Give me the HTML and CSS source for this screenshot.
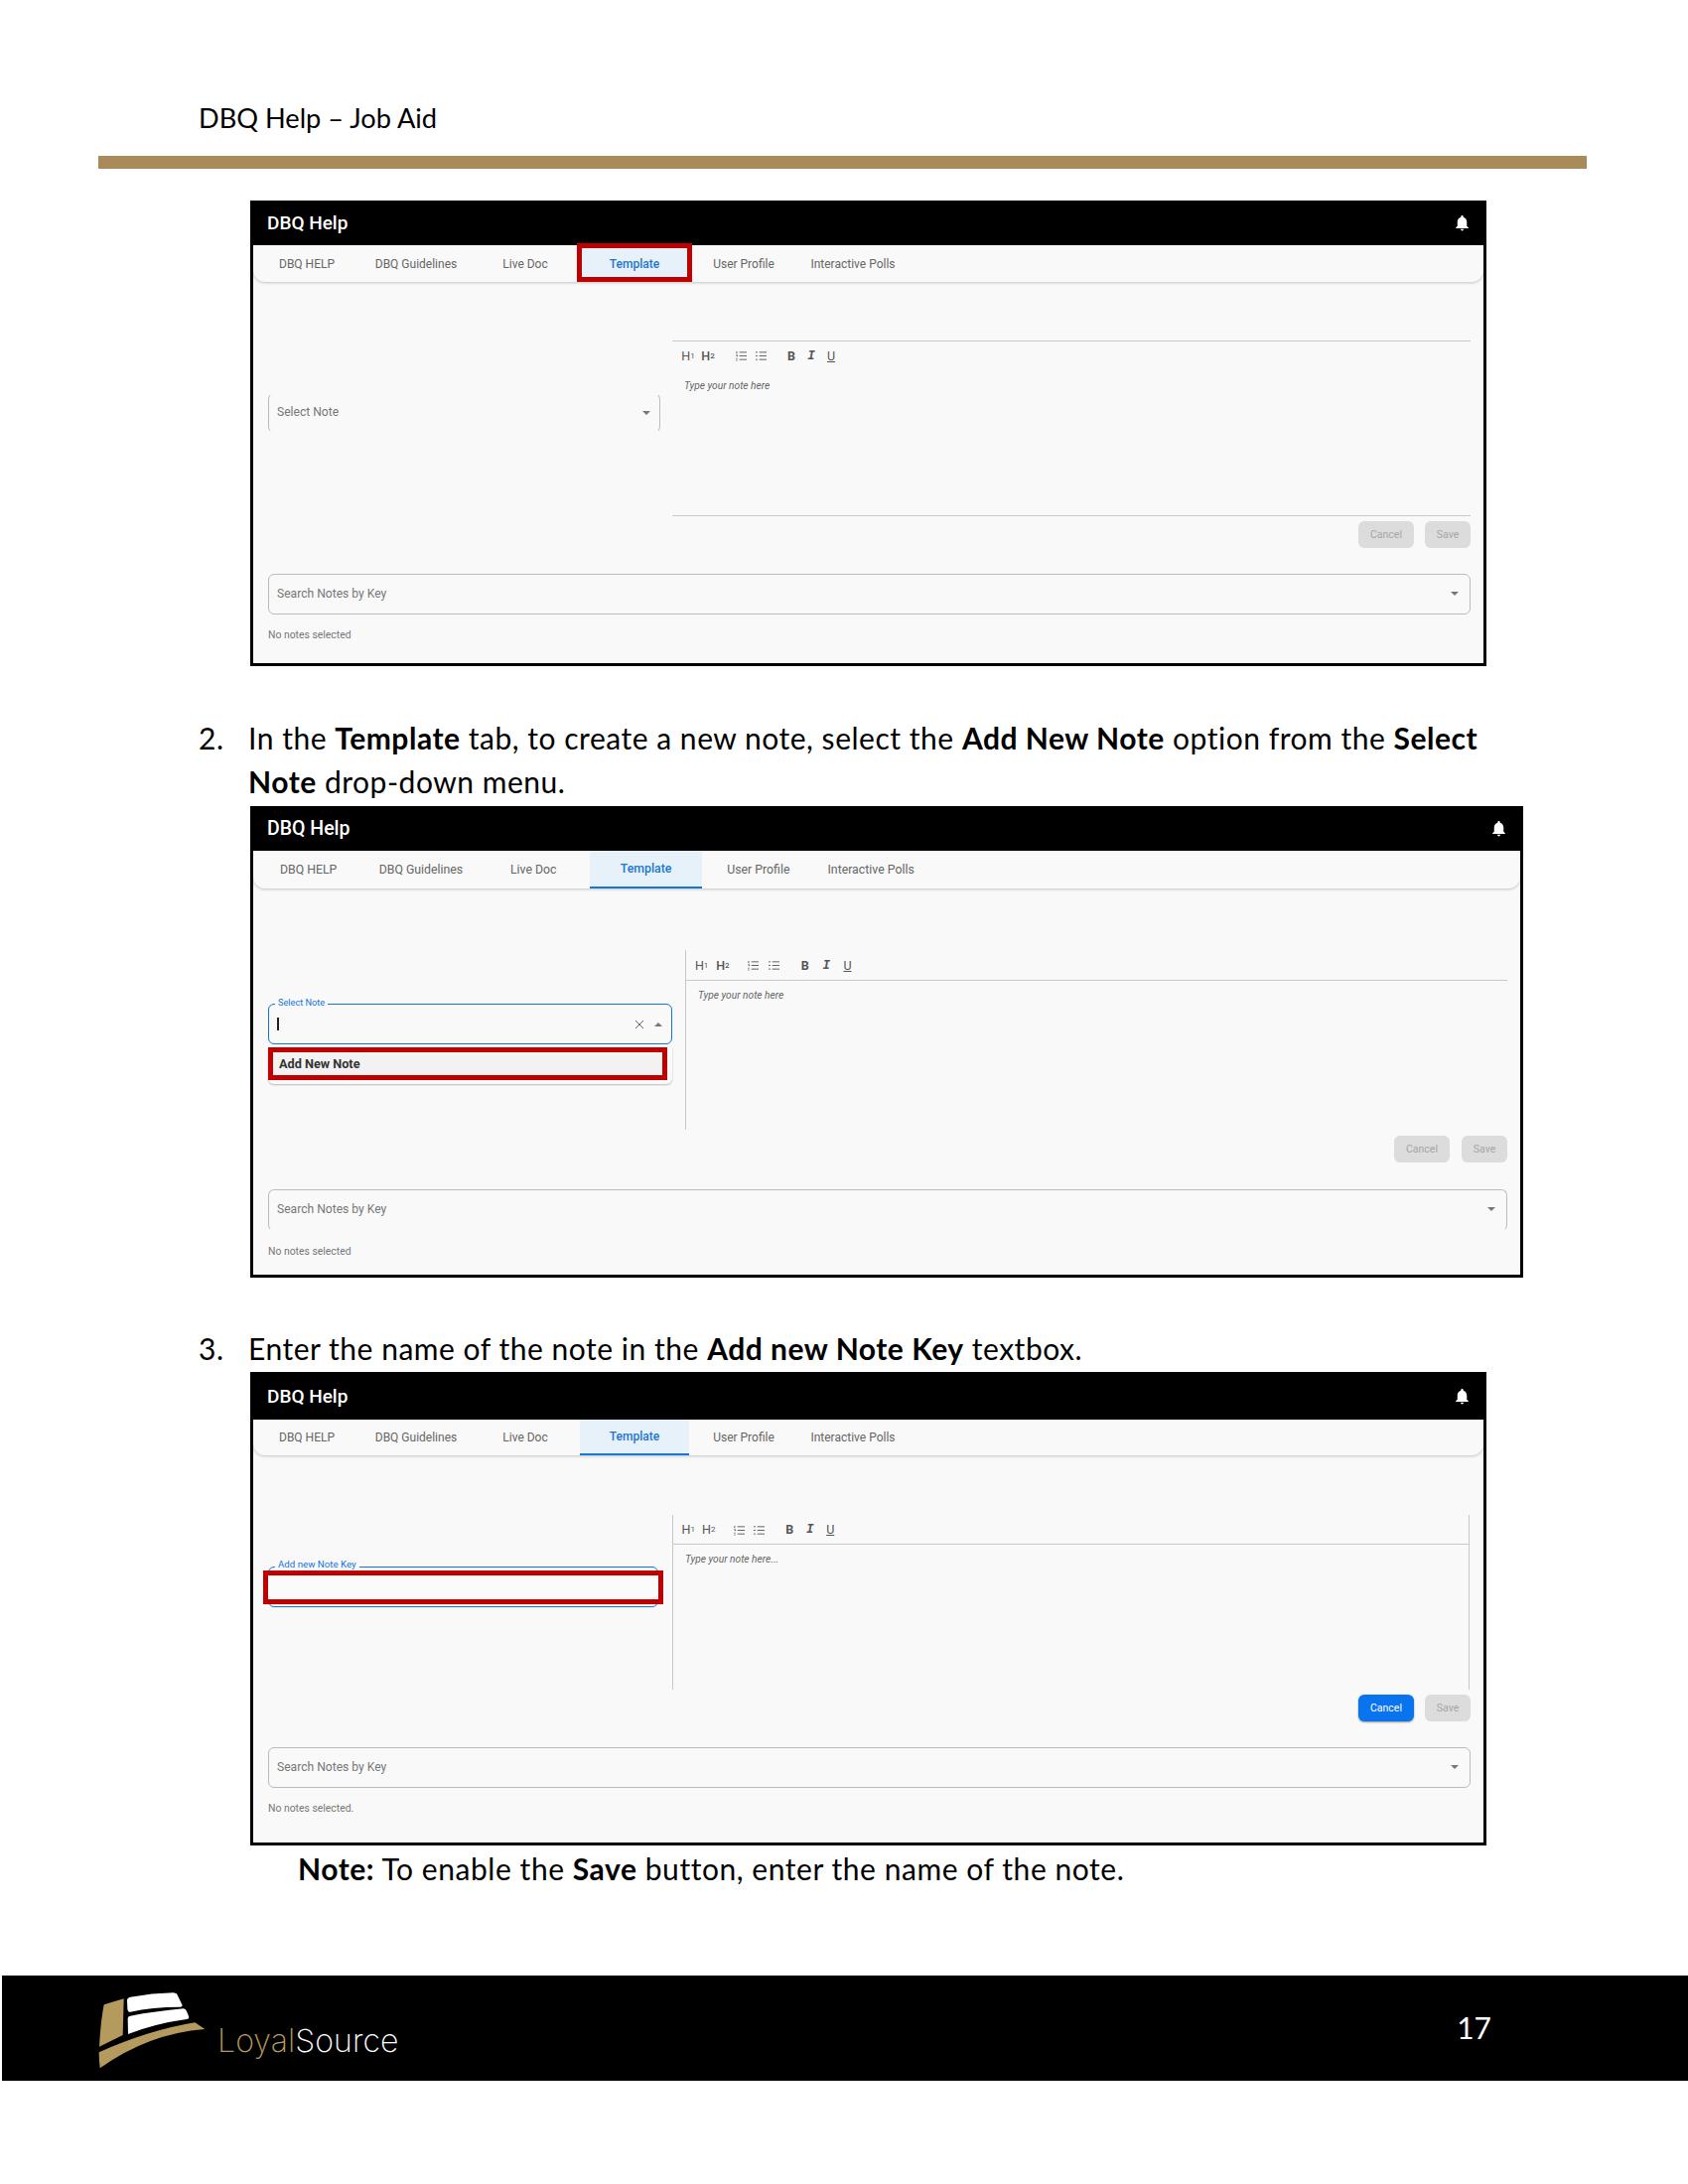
FILE: index.html
```html
<!DOCTYPE html>
<html lang="en">
<head>
<meta charset="utf-8">
<title>DBQ Help – Job Aid</title>
<link rel="stylesheet" href="styles.css">
</head>
<body>
<div class="page">
  <header class="doc-head">
    <h1 class="doc-title">DBQ Help – Job Aid</h1>
    <div class="doc-rule"></div>
  </header>

  <section class="shot shot--one">
    <div class="appbar"><span class="appbar-title">DBQ Help</span><svg class="bell" viewBox="0 0 24 24"><path d="M12 22c1.1 0 2-.9 2-2h-4c0 1.1.9 2 2 2zm6-6v-5c0-3.07-1.63-5.64-4.5-6.32V4c0-.83-.67-1.5-1.5-1.5s-1.5.67-1.5 1.5v.68C7.64 5.36 6 7.92 6 11v5l-2 2v1h16v-1l-2-2z"/></svg></div>
    <nav class="tabs">
      <span class="tab">DBQ HELP</span><span class="tab">DBQ Guidelines</span><span class="tab">Live Doc</span><span class="tab tab--active tab--flagged">Template</span><span class="tab">User Profile</span><span class="tab">Interactive Polls</span>
    </nav>
    <div class="workspace">
      <div class="note-col">
        <div class="field field--idle"><span class="field-text">Select Note</span><svg class="caret" viewBox="0 0 8 4"><path d="M0 0h8L4 4z"/></svg></div>
      </div>
      <div class="editor-col">
        <div class="editor">
          <div class="toolbar">
            <span class="tool tool--h">H<sub>1</sub></span><span class="tool tool--h tool--strong">H<sub>2</sub></span>
            <span class="tool tool--lists"><svg class="list" viewBox="0 0 12 12"><path d="M4 2h8M4 6h8M4 10h8" /><path d="M1 1v2.500M.3 5.300h1.400v1.400M.3 9h1.400M.3 11h1.400" /></svg></span><span class="tool"><svg class="list" viewBox="0 0 12 12"><path d="M4 2h8M4 6h8M4 10h8" /><path d="M0 2h2M0 6h2M0 10h2" /></svg></span>
            <span class="tool tool--marks tool--b">B</span><span class="tool tool--i">I</span><span class="tool tool--u">U</span>
          </div>
          <p class="editor-hint">Type your note here</p>
        </div>
        <div class="actions"><span class="btn">Cancel</span><span class="btn btn--save">Save</span></div>
      </div>
    </div>
    <div class="search"><span class="field-text">Search Notes by Key</span><svg class="caret" viewBox="0 0 8 4"><path d="M0 0h8L4 4z"/></svg></div>
    <p class="status">No notes selected</p>
  </section>

  <div class="step step--two"><span class="step-num">2.</span><p class="step-text">In the <b>Template</b> tab, to create a new note, select the <b>Add New Note</b> option from the <b>Select<br>Note</b> drop-down menu.</p></div>

  <section class="shot shot--two">
    <div class="appbar"><span class="appbar-title">DBQ Help</span><svg class="bell" viewBox="0 0 24 24"><path d="M12 22c1.1 0 2-.9 2-2h-4c0 1.1.9 2 2 2zm6-6v-5c0-3.07-1.63-5.64-4.5-6.32V4c0-.83-.67-1.5-1.5-1.5s-1.5.67-1.5 1.5v.68C7.64 5.36 6 7.92 6 11v5l-2 2v1h16v-1l-2-2z"/></svg></div>
    <nav class="tabs">
      <span class="tab">DBQ HELP</span><span class="tab">DBQ Guidelines</span><span class="tab">Live Doc</span><span class="tab tab--active tab--underlined">Template</span><span class="tab">User Profile</span><span class="tab">Interactive Polls</span>
    </nav>
    <div class="workspace">
      <div class="note-col">
        <div class="field field--focus"><span class="field-label">Select Note</span><span class="cursor"></span><svg class="clear" viewBox="0 0 10 10"><path d="M1 1l8 8M9 1L1 9"/></svg><svg class="caret caret--up" viewBox="0 0 8 4"><path d="M0 4h8L4 0z"/></svg></div>
        <div class="popup"><div class="option">Add New Note</div></div>
      </div>
      <div class="editor-col">
        <div class="editor">
          <div class="toolbar">
            <span class="tool tool--h">H<sub>1</sub></span><span class="tool tool--h tool--strong">H<sub>2</sub></span>
            <span class="tool tool--lists"><svg class="list" viewBox="0 0 12 12"><path d="M4 2h8M4 6h8M4 10h8" /><path d="M1 1v2.500M.3 5.300h1.400v1.400M.3 9h1.400M.3 11h1.400" /></svg></span><span class="tool"><svg class="list" viewBox="0 0 12 12"><path d="M4 2h8M4 6h8M4 10h8" /><path d="M0 2h2M0 6h2M0 10h2" /></svg></span>
            <span class="tool tool--marks tool--b">B</span><span class="tool tool--i">I</span><span class="tool tool--u">U</span>
          </div>
          <p class="editor-hint">Type your note here</p>
        </div>
        <div class="actions"><span class="btn">Cancel</span><span class="btn btn--save">Save</span></div>
      </div>
    </div>
    <div class="search"><span class="field-text">Search Notes by Key</span><svg class="caret" viewBox="0 0 8 4"><path d="M0 0h8L4 4z"/></svg></div>
    <p class="status">No notes selected</p>
  </section>

  <div class="step step--three"><span class="step-num">3.</span><p class="step-text">Enter the name of the note in the <b>Add new Note Key</b> textbox.</p></div>

  <section class="shot shot--three">
    <div class="appbar"><span class="appbar-title">DBQ Help</span><svg class="bell" viewBox="0 0 24 24"><path d="M12 22c1.1 0 2-.9 2-2h-4c0 1.1.9 2 2 2zm6-6v-5c0-3.07-1.63-5.64-4.5-6.32V4c0-.83-.67-1.5-1.5-1.5s-1.5.67-1.5 1.5v.68C7.64 5.36 6 7.92 6 11v5l-2 2v1h16v-1l-2-2z"/></svg></div>
    <nav class="tabs">
      <span class="tab">DBQ HELP</span><span class="tab">DBQ Guidelines</span><span class="tab">Live Doc</span><span class="tab tab--active tab--underlined">Template</span><span class="tab">User Profile</span><span class="tab">Interactive Polls</span>
    </nav>
    <div class="workspace">
      <div class="note-col">
        <div class="field field--focus"><span class="field-label">Add new Note Key</span><span class="field-flag"></span></div>
      </div>
      <div class="editor-col">
        <div class="editor">
          <div class="toolbar">
            <span class="tool tool--h">H<sub>1</sub></span><span class="tool tool--h">H<sub>2</sub></span>
            <span class="tool tool--lists"><svg class="list" viewBox="0 0 12 12"><path d="M4 2h8M4 6h8M4 10h8" /><path d="M1 1v2.500M.3 5.300h1.400v1.400M.3 9h1.400M.3 11h1.400" /></svg></span><span class="tool"><svg class="list" viewBox="0 0 12 12"><path d="M4 2h8M4 6h8M4 10h8" /><path d="M0 2h2M0 6h2M0 10h2" /></svg></span>
            <span class="tool tool--marks tool--b">B</span><span class="tool tool--i">I</span><span class="tool tool--u">U</span>
          </div>
          <p class="editor-hint">Type your note here...</p>
        </div>
        <div class="actions"><span class="btn btn--primary">Cancel</span><span class="btn btn--save">Save</span></div>
      </div>
    </div>
    <div class="search"><span class="field-text">Search Notes by Key</span><svg class="caret" viewBox="0 0 8 4"><path d="M0 0h8L4 4z"/></svg></div>
    <p class="status">No notes selected.</p>
  </section>

  <p class="note"><b>Note:</b> To enable the <b>Save</b> button, enter the name of the note.</p>

  <footer class="doc-foot">
    <svg class="logo-mark" viewBox="295 105 330 240">
      <path class="gold" d="M315 148L375 130L372 240L301 275Q305 200 315 148Z"/>
      <path class="gold" d="M300 292Q450 225 590 202L620 222Q450 235 303 340Q300 315 300 292Z"/>
      <path class="white" d="M385 135Q385 127 395 125Q460 113 525 112L535 115L552 150Q552 155 545 155Q460 155 395 170Q387 172 386 160Z"/>
      <path class="white" d="M387 190Q387 183 395 182Q470 168 555 160Q562 160 565 168L572 185Q572 192 565 192Q470 205 388 237Z"/>
    </svg>
    <span class="logo-word"><span class="logo-gold">Loyal</span>Source</span>
    <span class="page-num">17</span>
  </footer>
</div>
</body>
</html>
```

FILE: styles.css
```css
* { box-sizing: border-box; }
html, body { margin: 0; padding: 0; background: #fff; }
.page {
  width: 1700px;
  height: 2200px;
  overflow: hidden;
  font-family: "Lato", "Open Sans", sans-serif;
  color: #000;
}

/* document chrome */
.doc-head { padding-top: 99px; }
.doc-title {
  margin: 0 0 18px 200px;
  font-size: 27.200px;
  line-height: 40px;
  font-weight: 400;
}
.doc-rule { margin-left: 99px; width: 1499px; height: 13px; background: #a88b58; }

.step { display: flex; margin-left: 200px; font-size: 30px; line-height: 44px; letter-spacing: .52px; }
.step--two { margin-top: 50px; }
.step--three { margin-top: 49px; }
.step-num { width: 50px; flex: none; }
.step-text { margin: 0; white-space: nowrap; }
.note { margin: 1px 0 0 300px; font-size: 30px; line-height: 44px; letter-spacing: .55px; white-space: nowrap; }

.doc-foot {
  display: flex;
  align-items: flex-start;
  height: 106px;
  margin: 86px 0 0 2px;
  padding: 15px 198px 0 96px;
  background: #000;
  color: #fff;
}
.logo-mark { width: 110px; height: 80px; flex: none; }
.gold { fill: #b49a5d; }
.white { fill: #fff; }
.logo-word {
  margin: 31px 0 0 11px;
  font-family: "Inter", sans-serif;
  font-weight: 200;
  font-size: 32px;
  line-height: 40px;
  letter-spacing: .1px;
}
.logo-gold { color: #b49a5d; }
.page-num { margin: 17px 0 0 auto; font-size: 30px; line-height: 40px; }

/* captured screens */
.shot {
  margin-left: 252px;
  border: 3px solid #000;
  background: #f9f9f9;
  font-family: "Roboto", "Liberation Sans", sans-serif;
  color: #666;
  --tab-w: 110px;
  --tool-w: 20px;
  --gap-lists: 13px;
  --gap-marks: 11px;
}
.shot--one { width: 1245px; height: 469px; margin-top: 32px; }
.shot--two { width: 1282px; height: 475px; margin-top: 3px; --tab-w: 113.300px; --tool-w: 21.300px; --gap-lists: 9px; --gap-marks: 10px; }
.shot--three { width: 1245px; height: 477px; margin-top: 2px; --tool-w: 20.500px; --gap-lists: 10px; --gap-marks: 10px; }

.appbar {
  display: flex;
  align-items: center;
  justify-content: space-between;
  height: 42px;
  padding: 0 12px 4px 14px;
  background: #000;
  color: #fff;
}
.shot--three .appbar { height: 45px; padding-bottom: 2px; }
.appbar-title { font-size: 19px; font-weight: 500; }
.shot--two .appbar-title { font-size: 19.500px; }
.bell { width: 19px; height: 19px; fill: #fff; }

.tabs {
  display: flex;
  height: 37px;
  background: #f9f9f9;
  border-radius: 0 0 12px 12px;
  box-shadow: 0 1px 3px rgba(0, 0, 0, .22);
}
.shot--two .tabs { height: 38px; }
.shot--three .tabs { height: 36px; }
.tab {
  position: relative;
  flex: 0 0 var(--tab-w);
  display: flex;
  align-items: center;
  justify-content: center;
  font-size: 12px;
  white-space: nowrap;
}
.tab:first-child { margin-left: -1px; }
.shot--two .tab { font-size: 12.300px; }
.tab--active { background: #e7f1f9; color: #1976d2; font-weight: 500; }
.tab--underlined { border-bottom: 2px solid #1976d2; }
.tab--flagged::after {
  content: "";
  position: absolute;
  inset: -2px -3px 0;
  border: 5px solid #bf0000;
}

.workspace { display: flex; padding: 59px 13px 0 15px; gap: 12px; }
.shot--two .workspace { padding-top: 62px; gap: 13px; }
.shot--three .workspace { padding-top: 60px; gap: 14px; }
.note-col { flex: none; width: 395px; padding-top: 53px; }
.shot--two .note-col { width: 407px; padding-top: 54px; }
.shot--three .note-col { width: 393px; padding-top: 52px; }
.editor-col { flex: 1; min-width: 0; }

.field {
  position: relative;
  display: flex;
  align-items: center;
  height: 40px;
  padding: 0 9px 0 8px;
  border: 1px solid #bbb;
  border-radius: 6px;
}
.field--idle { border-top-color: transparent; border-bottom-color: transparent; }
.field--idle .field-text { margin-bottom: 2px; }
.field--focus { height: 41px; border: 1.500px solid #1273de; }
.field-text { font-size: 12.100px; color: #777; }
.field-label {
  position: absolute;
  top: -8px;
  left: 6px;
  padding: 0 3px;
  background: #f9f9f9;
  color: #1273de;
  font-size: 9.200px;
  line-height: 12px;
}
.shot--three .field-label { font-size: 9.700px; top: -9px; }
.field-flag {
  position: absolute;
  inset: 3px -6px 2px -6px;
  border: 5px solid #bf0000;
  background: #fbfbfb;
}
.cursor { width: 2px; height: 13px; background: #222; }
.clear { width: 10px; height: 10px; margin-left: auto; fill: none; stroke: #666; stroke-width: 1; }
.caret { width: 8px; height: 4px; margin-left: auto; fill: #777; }
.caret--up { margin-left: 10px; }

.popup {
  margin-top: 3px;
  height: 37px;
  background: #f9f9f9;
  border-radius: 0 0 6px 6px;
  box-shadow: 0 1px 2px rgba(0, 0, 0, .25);
}
.option {
  display: flex;
  align-items: center;
  width: 402px;
  height: 33px;
  padding-left: 6px;
  border: 5px solid #bf0000;
  background: #f2f2f2;
  color: #333;
  font-size: 12.700px;
  font-weight: 700;
}

.editor { height: 177px; }
.shot--one .editor { border-top: 1px solid #c8c8c8; border-bottom: 1px solid #c8c8c8; }
.shot--two .editor { height: 181px; border-left: 1px solid #c8c8c8; }
.shot--three .editor { height: 176px; border-left: 1px solid #c8c8c8; border-right: 1px solid #c8c8c8; margin-right: 1px; }
.toolbar { display: flex; align-items: center; height: 31px; padding: 0 0 2px 6px; color: #555; }
.shot--two .toolbar { height: 31px; padding: 1px 0 0 5px; border-bottom: 1px solid #c8c8c8; }
.shot--three .toolbar { height: 30px; padding: 1px 0 0 5px; border-bottom: 1px solid #c8c8c8; }
.tool {
  flex: 0 0 var(--tool-w);
  display: flex;
  align-items: center;
  justify-content: center;
  font-size: 12.500px;
  line-height: 14px;
}
.tool--lists { margin-left: var(--gap-lists); }
.tool--marks { margin-left: var(--gap-marks); }
.tool--h sub { font-size: 8px; line-height: 0; vertical-align: -1px; }
.tool--strong { font-weight: 500; }
.tool--b { font-weight: 700; }
.tool--i { font-family: "Liberation Mono", monospace; font-style: italic; font-weight: 700; }
.tool--u { text-decoration: underline; }
.list { width: 11px; height: 11px; fill: none; stroke: #555; stroke-width: 1; }
.editor-hint { margin: 7px 0 0 12px; font-size: 10.200px; line-height: 14px; font-style: italic; color: #666; }
.shot--two .editor-hint, .shot--three .editor-hint { margin-top: 8px; }

.actions { display: flex; justify-content: flex-end; gap: 11px; margin-top: 5px; }
.shot--two .actions { margin-top: 6px; gap: 12px; }
.btn {
  display: flex;
  align-items: center;
  justify-content: center;
  width: 56px;
  height: 27px;
  border-radius: 6px;
  background: #dcdcdc;
  color: #a6a6a6;
  font-size: 10.500px;
}
.btn--save { width: 46px; }
.btn--primary { background: #0a74ee; color: #fff; box-shadow: 0 1px 2px rgba(0, 0, 0, .4); }

.search {
  display: flex;
  align-items: center;
  height: 41px;
  margin: 26px 13px 0 15px;
  padding: 0 11px 1px 8px;
  border: 1px solid #bbb;
  border-radius: 6px;
}
.shot--two .search { height: 42px; margin-top: 27px; padding-bottom: 2px; border-bottom-color: transparent; }
.status { margin: 14px 0 0 15px; font-size: 10.400px; line-height: 14px; color: #777; }
```
